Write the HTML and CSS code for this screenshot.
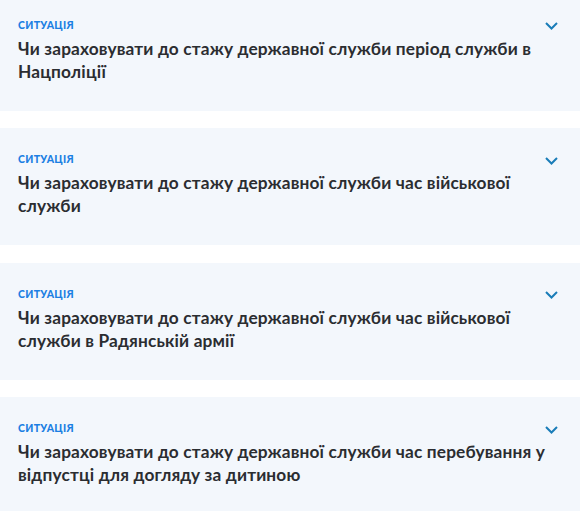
FILE: index.html
```html
<!DOCTYPE html>
<html lang="uk">
<head>
<meta charset="utf-8">
<link rel="stylesheet" href="styles.css">
</head>
<body>
<div class="list">
  <div class="card">
    <div class="head">
      <span class="label">Ситуація</span>
      <svg class="chev" width="13" height="8" viewBox="0 0 13 8"><path d="M1 1 L6.5 6.5 L12 1" fill="none" stroke="#1a7db8" stroke-width="2"/></svg>
    </div>
    <div class="title">Чи зараховувати до стажу державної служби період служби в Нацполіції</div>
  </div>
  <div class="card">
    <div class="head">
      <span class="label">Ситуація</span>
      <svg class="chev" width="13" height="8" viewBox="0 0 13 8"><path d="M1 1 L6.5 6.5 L12 1" fill="none" stroke="#1a7db8" stroke-width="2"/></svg>
    </div>
    <div class="title">Чи зараховувати до стажу державної служби час військової служби</div>
  </div>
  <div class="card">
    <div class="head">
      <span class="label">Ситуація</span>
      <svg class="chev" width="13" height="8" viewBox="0 0 13 8"><path d="M1 1 L6.5 6.5 L12 1" fill="none" stroke="#1a7db8" stroke-width="2"/></svg>
    </div>
    <div class="title">Чи зараховувати до стажу державної служби час військової служби в Радянській армії</div>
  </div>
  <div class="card">
    <div class="head">
      <span class="label">Ситуація</span>
      <svg class="chev" width="13" height="8" viewBox="0 0 13 8"><path d="M1 1 L6.5 6.5 L12 1" fill="none" stroke="#1a7db8" stroke-width="2"/></svg>
    </div>
    <div class="title">Чи зараховувати до стажу державної служби час перебування у відпустці для догляду за дитиною</div>
  </div>
</div>
</body>
</html>
```
FILE: styles.css
```css
html, body {
  margin: 0;
  padding: 0;
  background: #ffffff;
  overflow: hidden;
}
body {
  font-family: Lato, "Liberation Sans", sans-serif;
}
.list {
  display: flex;
  flex-direction: column;
  gap: 17.5px;
  margin-top: -6.5px;
}
.card {
  background: #f3f7fc;
  height: 117px;
  box-sizing: border-box;
  padding: 23px 22px 0 18px;
}
.head {
  display: flex;
  justify-content: space-between;
  align-items: center;
  height: 16px;
}
.label {
  text-transform: uppercase;
  color: #1b7fe3;
  font-weight: 900;
  font-size: 10.5px;
  letter-spacing: 0.3px;
}
.chev {
  display: block;
  margin-top: 3px;
}
.title {
  margin-top: 4px;
  font-size: 17.3px;
  line-height: 23px;
  font-weight: 700;
  color: #2b2d31;
  letter-spacing: 0.15px;
  padding-right: 6px;
}
```
